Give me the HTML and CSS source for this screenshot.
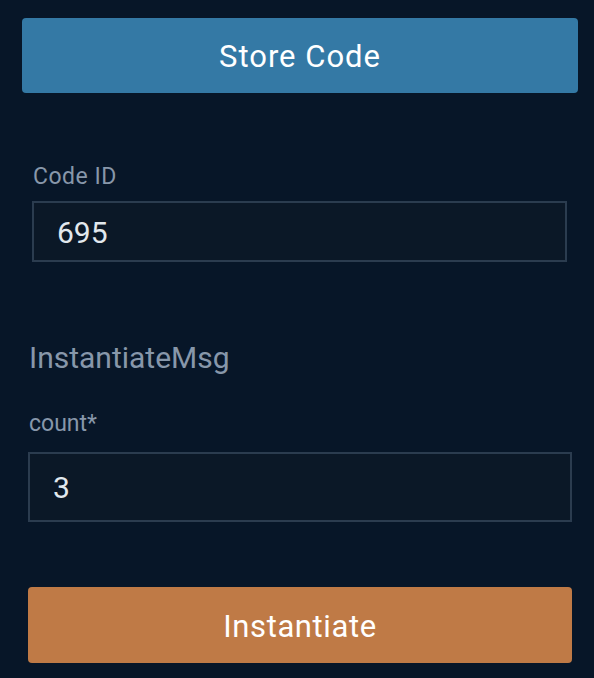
FILE: index.html
```html
<!DOCTYPE html>
<html lang="en">
<head>
<meta charset="utf-8">
<title>Store Code</title>
<link rel="stylesheet" href="styles.css">
</head>
<body>
<main class="page">
  <button class="btn btn-store" type="button">Store Code</button>

  <div class="field field-code">
    <label class="field-label" for="codeId">Code ID</label>
    <input class="field-input" id="codeId" type="text" value="695">
  </div>

  <h2 class="msg-title">InstantiateMsg</h2>

  <div class="field field-count">
    <label class="field-label" for="count">count*</label>
    <input class="field-input field-input-tall" id="count" type="text" value="3">
  </div>

  <button class="btn btn-instantiate" type="button">Instantiate</button>
</main>
</body>
</html>
```

FILE: styles.css
```css
html, body {
  margin: 0;
  padding: 0;
  background: #071628;
}

body {
  font-family: Roboto, "Liberation Sans", Arial, sans-serif;
  width: 594px;
  height: 678px;
  overflow: hidden;
}

.page {
  display: flex;
  flex-direction: column;
}

.btn {
  display: flex;
  align-items: center;
  justify-content: center;
  border: none;
  border-radius: 4px;
  color: #ffffff;
  font-family: Roboto, "Liberation Sans", Arial, sans-serif;
  font-size: 31px;
  padding: 2px 0 0;
  box-sizing: border-box;
}

.btn-store {
  margin: 18px 16px 0 22px;
  height: 75px;
  background: #3479a5;
  letter-spacing: 1px;
}

.btn-instantiate {
  margin: 65px 22px 0 28px;
  height: 76px;
  background: #bf7a46;
  letter-spacing: 0.6px;
}

.field {
  display: flex;
  flex-direction: column;
}

.field-code {
  margin: 70px 27px 0 32px;
}

.field-count {
  margin: 35px 22px 0 28px;
}

.field-label {
  font-size: 23px;
  line-height: 26px;
  color: #8797aa;
  padding: 1px 0 0 1px;
}

.field-code .field-label {
  letter-spacing: 0.5px;
}

.field-input {
  box-sizing: border-box;
  margin-top: 11px;
  height: 61px;
  border: 2px solid #2b3c4f;
  background: #0b1827;
  color: #e2e8ee;
  font-family: Roboto, "Liberation Sans", Arial, sans-serif;
  font-size: 30px;
  padding: 1px 0 0 23px;
  outline: none;
}

.field-count .field-input {
  margin-top: 15px;
}

.field-input-tall {
  height: 70px;
}

.msg-title {
  margin: 79px 0 0 29px;
  font-size: 30px;
  line-height: 34px;
  font-weight: 400;
  color: #8797aa;
}
```
